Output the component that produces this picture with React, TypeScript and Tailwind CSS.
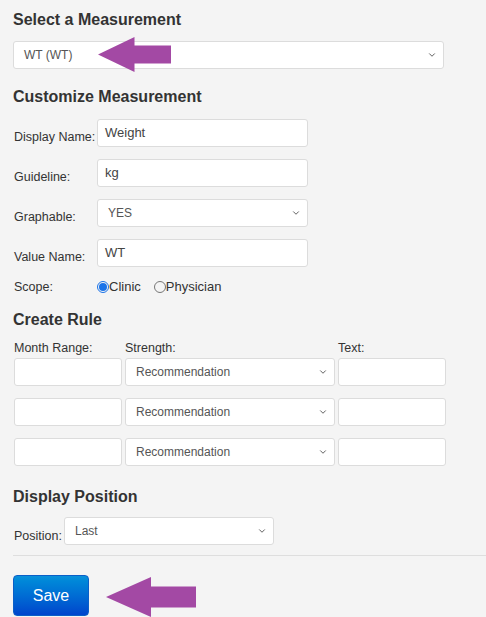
import { ChevronDown } from 'lucide-react';

const font = { fontFamily: '"Liberation Sans", Arial, sans-serif' };

function Chevron() {
  return (
    <ChevronDown
      className="w-[10px] h-[10px] text-[#555] shrink-0"
      strokeWidth={2.25}
    />
  );
}

function Field({ value, className = '' }: { value?: string; className?: string }) {
  return (
    <div
      className={`h-[28px] bg-white border border-[#dcdcdc] rounded-[3px] flex items-center pl-[7px] text-[13px] text-[#444] ${className}`}
    >
      {value}
    </div>
  );
}

function SelectBox({
  value,
  className = '',
}: {
  value: string;
  className?: string;
}) {
  return (
    <div
      className={`h-[28px] bg-white border border-[#dcdcdc] rounded-[3px] flex items-center justify-between pl-[10px] pr-[6px] text-[12px] text-[#555] ${className}`}
    >
      <span>{value}</span>
      <Chevron />
    </div>
  );
}

function Row({ label, children }: { label: string; children: React.ReactNode }) {
  return (
    <div className="flex items-end mb-[12px]">
      <span className="w-[83px] pb-[3px] text-[12.5px] leading-[14px] text-[#333]">
        {label}
      </span>
      {children}
    </div>
  );
}

function Radio({ checked, label }: { checked?: boolean; label: string }) {
  return (
    <span className="flex items-center">
      <span
        className={`w-[12px] h-[12px] rounded-full border flex items-center justify-center ${
          checked ? 'border-[#1a73e8]' : 'border-[#767676]'
        }`}
      >
        {checked && <span className="w-[8px] h-[8px] rounded-full bg-[#1a73e8]" />}
      </span>
      <span className="text-[13px] text-[#333]">{label}</span>
    </span>
  );
}

function Arrow({ className }: { className: string }) {
  return (
    <svg className={className} viewBox="0 0 100 50" preserveAspectRatio="none">
      <path d="M0 25 L50 0 L50 12 L100 12 L100 38 L50 38 L50 50 Z" fill="#a349a4" />
    </svg>
  );
}

export default function App() {
  const rules = [0, 1, 2];

  return (
    <div className="relative w-full h-[617px] overflow-hidden bg-[#f4f4f4]" style={font}>
      <div className="pl-[13px] pt-[10px]">
        {/* Select a Measurement */}
        <h2 className="text-[16px] leading-[20px] font-bold text-[#333]">
          Select a Measurement
        </h2>
        <SelectBox value="WT (WT)" className="mt-[11px] w-[431px] text-[11.5px]" />

        {/* Customize Measurement */}
        <h2 className="mt-[18px] text-[16px] leading-[20px] font-bold text-[#333]">
          Customize Measurement
        </h2>
        <div className="mt-[12px] pl-[1px]">
          <Row label="Display Name:">
            <Field value="Weight" className="w-[211px]" />
          </Row>
          <Row label="Guideline:">
            <Field value="kg" className="w-[211px]" />
          </Row>
          <Row label="Graphable:">
            <SelectBox value="YES" className="w-[211px] text-[11.5px]" />
          </Row>
          <Row label="Value Name:">
            <Field value="WT" className="w-[211px]" />
          </Row>
          <div className="flex items-center h-[16px] mt-[1px]">
            <span className="w-[83px] text-[12.5px] text-[#333]">Scope:</span>
            <div className="flex items-center gap-[13px]">
              <Radio checked label="Clinic" />
              <Radio label="Physician" />
            </div>
          </div>
        </div>

        {/* Create Rule */}
        <h2 className="mt-[15px] text-[16px] leading-[20px] font-bold text-[#333]">
          Create Rule
        </h2>
        <div className="pl-[1px]">
          <div className="mt-[11px] flex text-[12.5px] leading-[14px] text-[#333]">
            <span className="w-[111px]">Month Range:</span>
            <span className="w-[213px]">Strength:</span>
            <span>Text:</span>
          </div>
          <div className="mt-[3px] flex flex-col gap-[12px]">
            {rules.map((r) => (
              <div key={r} className="flex gap-[3px]">
                <Field className="w-[108px]" />
                <SelectBox value="Recommendation" className="w-[210px]" />
                <Field className="w-[108px]" />
              </div>
            ))}
          </div>
        </div>

        {/* Display Position */}
        <h2 className="mt-[21px] text-[16px] leading-[20px] font-bold text-[#333]">
          Display Position
        </h2>
        <div className="mt-[10px] pl-[1px] flex items-end">
          <span className="w-[50px] pb-[2px] text-[12.5px] leading-[14px] text-[#333]">
            Position:
          </span>
          <SelectBox value="Last" className="w-[210px] h-[27px]" />
        </div>
      </div>

      <div className="ml-[13px] mt-[10px] border-t border-[#dedede]" />

      <div className="pl-[13px] pt-[19px]">
        <button className="w-[76px] h-[41px] rounded-[4px] text-white text-[16px] bg-gradient-to-b from-[#0a90da] to-[#0044cc] border border-[#0a5fc8]">
          Save
        </button>
      </div>

      {/* Arrows */}
      <Arrow className="absolute left-[98px] top-[37px] w-[73px] h-[35px]" />
      <Arrow className="absolute left-[106px] top-[577px] w-[90px] h-[40px]" />
    </div>
  );
}
